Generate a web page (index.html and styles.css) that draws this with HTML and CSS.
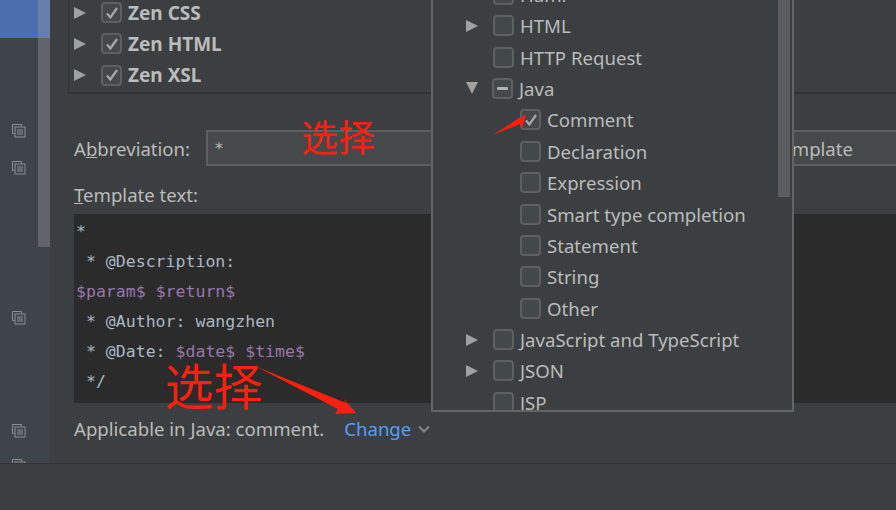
FILE: index.html
```html
<!DOCTYPE html>
<html lang="en">
<head>
<meta charset="utf-8">
<title>Live Templates</title>
<link rel="stylesheet" href="styles.css">
</head>
<body>
<svg class="defs" width="0" height="0" aria-hidden="true">
  <symbol id="copy" viewBox="0 0 14 14">
    <path d="M9.5 2.5V.5H.5v9h2" fill="none" stroke="#8b9094" stroke-width="1"/>
    <rect x="3" y="3" width="10" height="10" fill="none" stroke="#8b9094" stroke-width="1"/>
    <path d="M5 6h6M5 8h6M5 10h6" stroke="#8b9094" stroke-width="1"/>
  </symbol>
  <symbol id="check" viewBox="0 0 20 20">
    <path d="M5 10.5l3.400 4L15 5" fill="none" stroke="#a8a8a8" stroke-width="2.200"/>
  </symbol>
</svg>
<div class="app">
  <div class="workspace">
    <aside class="sidebar">
      <div class="selected"></div>
      <svg class="side-icon first"><use href="#copy"/></svg>
      <svg class="side-icon"><use href="#copy"/></svg>
      <svg class="side-icon far"><use href="#copy"/></svg>
      <svg class="side-icon mid"><use href="#copy"/></svg>
      <svg class="side-icon near"><use href="#copy"/></svg>
      <div class="side-scroll"><div class="side-thumb"></div></div>
    </aside>
    <main class="main">
      <section class="tree">
        <div class="row"><i class="tri"></i><span class="box on"><svg><use href="#check"/></svg></span><b>Zen CSS</b></div>
        <div class="row"><i class="tri"></i><span class="box on"><svg><use href="#check"/></svg></span><b>Zen HTML</b></div>
        <div class="row"><i class="tri"></i><span class="box on"><svg><use href="#check"/></svg></span><b>Zen XSL</b></div>
      </section>
      <div class="abbr">
        <label class="abbr-label">A<u>b</u>breviation:</label>
        <div class="input"><span class="star">*</span><span>Template</span></div>
      </div>
      <label class="tpl-label"><u>T</u>emplate text:</label>
      <pre class="editor">*
 * @Description:
<em>$param$</em> <em>$return$</em>
 * @Author: wangzhen
 * @Date: <em>$date$</em> <em>$time$</em>
 */</pre>
      <div class="applicable">
        <span>Applicable in Java: comment.</span>
        <a class="change">Change</a>
        <svg class="chev" width="12" height="8" viewBox="0 0 12 8"><path d="M1 1.500l5 5 5-5" fill="none" stroke="#7f8488" stroke-width="2"/></svg>
      </div>
    </main>
  </div>
  <footer class="footer"></footer>

  <div class="popup">
    <div class="list">
      <div class="row"><i class="tri"></i><span class="box"></span><span>Haml</span></div>
      <div class="row"><i class="tri"></i><span class="box"></span><span>HTML</span></div>
      <div class="row"><i class="none"></i><span class="box"></span><span>HTTP Request</span></div>
      <div class="row"><i class="tri down"></i><span class="box mixed"><s></s></span><span>Java</span></div>
      <div class="row child"><span class="box on"><svg><use href="#check"/></svg></span><span>Comment</span></div>
      <div class="row child"><span class="box"></span><span>Declaration</span></div>
      <div class="row child"><span class="box"></span><span>Expression</span></div>
      <div class="row child"><span class="box"></span><span>Smart type completion</span></div>
      <div class="row child"><span class="box"></span><span>Statement</span></div>
      <div class="row child"><span class="box"></span><span>String</span></div>
      <div class="row child"><span class="box"></span><span>Other</span></div>
      <div class="row"><i class="tri"></i><span class="box"></span><span>JavaScript and TypeScript</span></div>
      <div class="row"><i class="tri"></i><span class="box"></span><span>JSON</span></div>
      <div class="row"><i class="none"></i><span class="box"></span><span>JSP</span></div>
    </div>
    <div class="pop-thumb"></div>
  </div>

  <span class="note small">选择</span>
  <span class="note big">选择</span>
  <svg class="arrows" width="896" height="510" viewBox="0 0 896 510" aria-hidden="true">
    <polygon points="257,367 338,409 335,414 356,413 343,398 346,403" fill="#fd1f10"/>
    <polygon points="493,135 519,118 526,115 522,128 520,124" fill="#fd1f10"/>
  </svg>
</div>
</body>
</html>
```

FILE: styles.css
```css
* { box-sizing: border-box; }
html, body { margin: 0; height: 100%; overflow: hidden; }
body { background: #3c3f41; color: #bbbbbb; font-family: "Noto Sans", "Open Sans", sans-serif; font-size: 18.6px; }
.defs { position: absolute; }
.app { position: relative; width: 896px; height: 510px; overflow: hidden; display: flex; flex-direction: column; }
.workspace { flex: 0 0 463px; display: flex; min-height: 0; overflow: hidden; }
.footer { flex: 1; border-top: 1px solid #323232; background: #3c3f41; }

.sidebar { position: relative; flex: 0 0 50px; background: #3e434c; display: flex; flex-direction: column; align-items: flex-start; }
.selected { position: absolute; left: 0; top: 0; width: 50px; height: 38px; background: #4b6eaf; }
.side-icon { width: 14px; height: 14px; margin-left: 12px; flex: none; position: relative; }
.side-icon.first { margin-top: 124px; }
.side-icon + .side-icon { margin-top: 23px; }
.side-icon.far { margin-top: 136px; }
.side-icon.mid { margin-top: 99px; }
.side-icon.near { margin-top: 21px; }
.side-scroll { position: absolute; left: 38px; top: 0; width: 12px; height: 247px; }
.side-thumb { height: 100%; background: rgba(160,160,165,.35); }

.main { flex: 1; min-width: 0; padding-left: 18px; display: flex; flex-direction: column; }
.tree { height: 94px; margin-right: -20px; border-left: 1px solid #323232; border-bottom: 2px solid #323232; padding-left: 5px; display: flex; flex-direction: column; justify-content: flex-end; padding-bottom: 1px; }
.row { display: flex; align-items: center; height: 31.4px; flex: none; white-space: nowrap; }
.tri { width: 0; height: 0; border-left: 12px solid #a0a0a0; border-top: 6.500px solid transparent; border-bottom: 6.500px solid transparent; margin-right: 15px; flex: none; }
.tri.down { border-left: 6.500px solid transparent; border-right: 6.500px solid transparent; border-top: 12px solid #a0a0a0; border-bottom: 0; margin-right: 14px; }
.none { width: 12px; margin-right: 15px; flex: none; }
.box { width: 21px; height: 21px; border: 2px solid #5d6061; border-radius: 4px; background: #43494a; margin-right: 6px; flex: none; display: flex; align-items: center; justify-content: center; }
.box svg { width: 20px; height: 20px; flex: none; }
.box s { width: 11px; height: 3px; background: #b0b0b0; border-radius: 1px; }
.tree b { font-weight: 700; font-size: 19px; }

.abbr { display: flex; align-items: center; margin-top: 36px; margin-left: 6px; margin-right: -20px; height: 36px; }
.abbr-label { width: 132px; flex: none; }
.input { flex: 1; height: 36px; border: 2px solid #5d6061; border-right: 0; background: #45494a; padding: 0 63px 0 6px; display: flex; align-items: center; justify-content: space-between; }
.star { font-family: "DejaVu Sans Mono", monospace; font-size: 16.500px; }
.tpl-label { margin: 15px 0 0 6px; line-height: 28px; height: 28px; }
.editor { margin: 5px -20px 0 6px; padding: 3px 0 0 2px; height: 189px; background: #2b2b2b; color: #a9b7c6; font-family: "DejaVu Sans Mono", monospace; font-size: 16.550px; line-height: 30px; overflow: hidden; }
.editor em { font-style: normal; color: #9876aa; }
.applicable { display: flex; align-items: center; height: 50px; margin-left: 6px; }
.change { color: #589df6; margin-left: 20px; }
.chev { margin-left: 7px; margin-top: 2px; }

.popup { position: absolute; left: 431px; top: -4px; width: 363px; height: 416px; border: 2px solid #646464; background: #3c3f41; overflow: hidden; }
.list { margin-top: -19.400px; padding-left: 33px; }
.row.child { padding-left: 54px; }
.pop-thumb { position: absolute; left: 345px; top: 0; width: 12px; height: 199px; background: #5a5c5e; }

.note { position: absolute; font-family: "Noto Sans CJK SC", sans-serif; color: #fd1f10; line-height: 1; font-weight: 400; }
.note.small { left: 301px; top: 118px; font-size: 37px; }
.note.big { left: 165px; top: 359px; font-size: 49px; }
.arrows { position: absolute; left: 0; top: 0; pointer-events: none; }
```
